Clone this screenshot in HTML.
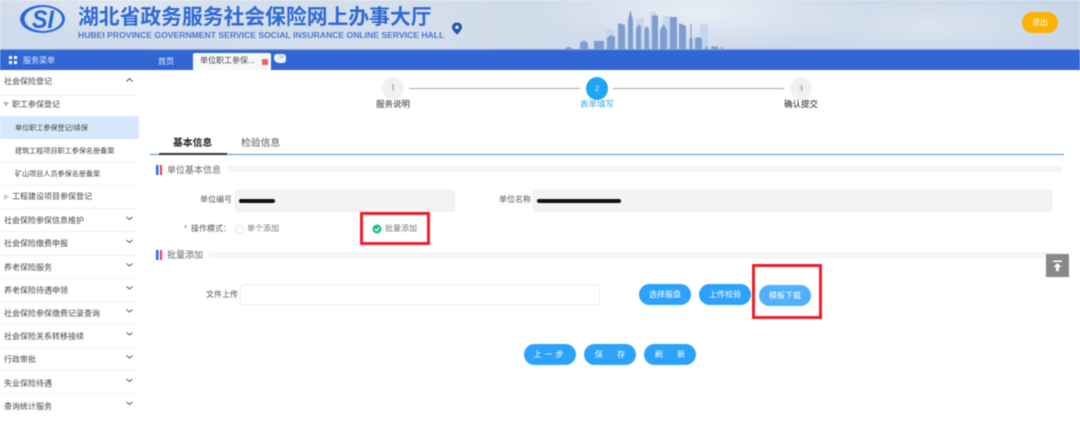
<!DOCTYPE html>
<html lang="zh-CN">
<head>
<meta charset="utf-8">
<title>湖北省政务服务社会保险网上办事大厅</title>
<style>
html,body{margin:0;padding:0;width:1080px;height:433px;overflow:hidden;background:#fff}
#p{position:relative;width:1080px;height:433px;overflow:hidden;background:#fff;font-family:"Liberation Sans","Noto Sans CJK SC",sans-serif;color:#555;filter:blur(.45px)}
#p div,#p span.a{position:absolute;white-space:nowrap}
.hd{left:0;top:0;width:1080px;height:50px;background:
radial-gradient(ellipse 170px 40px at 700px 12px,#e8eef6 0,rgba(232,238,246,0) 100%),
radial-gradient(ellipse 150px 35px at 930px 25px,#dbe4f0 0,rgba(219,228,240,0) 100%),
radial-gradient(ellipse 150px 30px at 120px 5px,#dfe7f2 0,rgba(223,231,242,0) 100%),
linear-gradient(90deg,#cfdbea 0,#d5dfec 35%,#cdd9e9 60%,#c8d6e8 100%)}
.bar{left:0;top:50px;width:1080px;height:20px;background:#3167d5}
.m{left:4px;font-size:8px;line-height:12px;color:#444;font-weight:400}
.sep{left:0;width:139px;height:1px;background:#f0f0f0}
.btn{height:21px;line-height:21px;width:52px;border-radius:11px;background:#2ca2fb;color:#fff;font-size:8px;text-align:center}
.lab{font-size:8px;line-height:12px;color:#555}
.strip{height:6px;background:#f5f5f7}
.sb{width:6px;height:10px;background:linear-gradient(90deg,#1f6ff0 0 45%,#fff 45% 66%,#f0304a 66% 100%)}
.in{box-sizing:border-box;border:1px solid #ececec;border-radius:3px}
.rb{box-sizing:border-box;border:3px solid #e8202c}
.sc{background:#111;height:4px;border-radius:2px}
</style>
</head>
<body>
<div id="p">
<div class="hd"></div>

<svg style="position:absolute;left:0;top:0" width="1080" height="52" viewBox="0 0 1080 52">
<path fill-rule="evenodd" d="M20 19a22.500 14 0 1 0 45 0a22.500 14 0 1 0-45 0zM24.500 19a18.500 11.800 0 1 1 37.500 0a18.500 11.800 0 1 1-37.500 0z" fill="#2568dc"/>
<text x="32" y="28" font-family="Liberation Sans,sans-serif" font-style="italic" font-weight="700" font-size="25" fill="#2568dc" textLength="22" lengthAdjust="spacingAndGlyphs">SI</text>
<path d="M457 22.500c-3.300 0-5 2.400-5 4.700 0 3 5 7.300 5 7.300s5-4.300 5-7.300c0-2.300-1.700-4.700-5-4.700z" fill="#1c56a8"/>
<circle cx="457" cy="27.300" r="1.800" fill="#dfe7f2"/>
<g fill="#bcd3ec" opacity=".7">
<rect x="606" y="30" width="8" height="20"/><rect x="636" y="18" width="8" height="32"/><rect x="650" y="12" width="6" height="38"/><rect x="663" y="16" width="7" height="34"/><rect x="700" y="24" width="8" height="26"/>
</g>
<g fill="#7f9dd0">
<path d="M564 50c1-2 3-3 4.500-3s4 1 4.500 3z"/>
<path d="M580 50v-7l4-2.500 4 2.500v7z"/>
<rect x="594" y="41" width="10" height="9"/>
<path d="M607 50V38l4-3 4 2v13z"/>
<path d="M618 50V23l7 2v25z"/>
<path d="M628 50V20l2.500-10 2.500 10v30z"/>
<path d="M636 50V29l2.500-5 2.500 3v23z"/>
<path d="M644.500 50V29l2-3 2.500 3v21z"/>
<path d="M652 50V16l3-1 3 1v34z"/>
<path d="M660 50V30l3.500-6 3.500 6v20z"/>
<rect x="670" y="17" width="7" height="33"/>
<path d="M679 50V23l7 3v24z"/>
<rect x="689.500" y="38" width="3" height="12"/><rect x="690.500" y="24" width="1" height="16"/>
<path d="M695 50V38l4-1 3 2v11z"/>
<path d="M705 50v-3l2-1 1 4zM711 50v-3l2-1 2 1 1-1 2 1 1 3zM721 50v-4l2 2v2z"/>
</g>
<rect x="0" y="49" width="1080" height="1" fill="#8ba4d0"/>
</svg>

<div style="left:78px;top:6px;font-size:20.800px;line-height:24px;font-weight:700;color:#2f69d6">湖北省政务服务社会保险网上办事大厅</div>
<div style="left:78px;top:30px;font-size:8.600px;line-height:11px;font-weight:700;color:#4677d4">HUBEI PROVINCE GOVERNMENT SERVICE SOCIAL INSURANCE ONLINE SERVICE HALL</div>
<div style="left:1022px;top:12px;width:36px;height:21px;border-radius:11px;background:#fbb203;color:#fff;font-size:8px;line-height:21px;text-align:center">退出</div>

<div class="bar"></div>
<div style="left:9px;top:56px;width:3px;height:3px;background:#fff;box-shadow:5px 0 #fff,0 5px #fff,5px 5px #fff"></div>
<div style="left:23px;top:55px;font-size:8px;line-height:12px;color:#e6eefc">服务菜单</div>
<div style="left:158px;top:56px;font-size:8px;line-height:12px;color:#e6eefc">首页</div>
<div style="left:193px;top:53px;width:78px;height:17px;background:#f7f8fa;border-radius:2px 2px 0 0"></div>
<div style="left:200px;top:55px;font-size:8px;line-height:12px;color:#444">单位职工参保...</div>
<div style="left:262px;top:59px;width:6px;height:6px;background:#f4605c"></div>
<div style="left:274px;top:54px;width:12px;height:9px;background:#eef2fb;border-radius:3px 3px 3px 5px"></div>
<div style="left:278px;top:55px;font-size:6px;line-height:7px;color:#8a9ab8">≫</div>

<!-- Sidebar -->
<div class="m" style="top:76px">社会保险登记</div>
<div class="sep" style="top:95px"></div>
<div style="left:3px;top:102px;width:0;height:0;border-left:3px solid transparent;border-right:3px solid transparent;border-top:5px solid #bbb"></div>
<div class="m" style="left:12px;top:99px">职工参保登记</div>
<div style="left:0;top:116px;width:139px;height:23px;background:#d5e9fd"></div>
<div class="m" style="left:15px;top:122px;font-size:7.100px">单位职工参保登记/续保</div>
<div class="sep" style="top:162px"></div>
<div class="m" style="left:15px;top:145px;font-size:7.100px">建筑工程项目职工参保名册备案</div>
<div class="sep" style="top:185px"></div>
<div class="m" style="left:15px;top:168px;font-size:7.100px">矿山项目人员参保名册备案</div>
<div style="left:4px;top:194px;width:0;height:0;border-top:3px solid transparent;border-bottom:3px solid transparent;border-left:5px solid #ccc"></div>
<div class="m" style="left:12px;top:191px">工程建设项目参保登记</div>
<div class="sep" style="top:208px"></div>
<div class="m" style="top:215px">社会保险参保信息维护</div>
<div class="sep" style="top:231px"></div>
<div class="m" style="top:238px">社会保险缴费申报</div>
<div class="sep" style="top:255px"></div>
<div class="m" style="top:262px">养老保险服务</div>
<div class="sep" style="top:278px"></div>
<div class="m" style="top:285px">养老保险待遇申领</div>
<div class="sep" style="top:301px"></div>
<div class="m" style="top:308px">社会保险参保缴费记录查询</div>
<div class="sep" style="top:324px"></div>
<div class="m" style="top:331px">社会保险关系转移接续</div>
<div class="sep" style="top:347px"></div>
<div class="m" style="top:354px">行政审批</div>
<div class="sep" style="top:370px"></div>
<div class="m" style="top:378px">失业保险待遇</div>
<div class="sep" style="top:393px"></div>
<div class="m" style="top:401px">查询统计服务</div>

<svg style="position:absolute;left:124px;top:70px" width="14" height="345" viewBox="0 0 14 345" fill="none" stroke="#555" stroke-width="1">
<path d="M2.500 11.500l3-3 3 3"/>
<path d="M2.500 147l3 2.500 3-2.500M2.500 170l3 2.500 3-2.500M2.500 193.500l3 2.500 3-2.500M2.500 216.500l3 2.500 3-2.500M2.500 239.500l3 2.500 3-2.500M2.500 262.500l3 2.500 3-2.500M2.500 285.500l3 2.500 3-2.500M2.500 309l3 2.500 3-2.500M2.500 332l3 2.500 3-2.500"/>
</svg>

<!-- Steps -->
<div style="left:382px;top:77px;width:22px;height:22px;border-radius:50%;background:#f1f1f1;color:#777;font:8px/22px 'Liberation Serif',serif;text-align:center">1</div>
<div style="left:409px;top:88px;width:171px;height:1px;background:#a8a8a8"></div>
<div style="left:586px;top:77px;width:22px;height:23px;border-radius:50%;background:#1ea6f2;color:#dff2ff;font:8px/23px 'Liberation Serif',serif;text-align:center">2</div>
<div style="left:613px;top:88px;width:171px;height:1px;background:#a8a8a8"></div>
<div style="left:790px;top:77px;width:22px;height:23px;border-radius:50%;background:#f1f1f1;color:#777;font:8px/23px 'Liberation Serif',serif;text-align:center">3</div>
<div style="left:376px;top:98px;font-size:8.500px;line-height:12px;color:#333">服务说明</div>
<div style="left:580px;top:98px;font-size:8.500px;line-height:12px;color:#38a6f0">表单填写</div>
<div style="left:784px;top:98px;font-size:8.500px;line-height:12px;color:#222">确认提交</div>

<!-- Tabs -->
<div style="left:173px;top:137px;font-size:9.800px;line-height:13px;color:#222;font-weight:700">基本信息</div>
<div style="left:241px;top:137px;font-size:9.800px;line-height:13px;color:#555">检验信息</div>
<div style="left:150px;top:154px;width:914px;height:1px;background:#4a94d8"></div>
<div style="left:159px;top:153px;width:68px;height:1.500px;background:#333"></div>

<!-- Section 1 -->
<div class="sb" style="left:156px;top:165px"></div>
<div style="left:167px;top:164px;font-size:9px;line-height:12px;color:#666">单位基本信息</div>
<div class="strip" style="left:227px;top:166px;width:835px"></div>

<div class="lab" style="left:200px;top:194px">单位编号</div>
<div class="in" style="left:235px;top:190px;width:220px;height:22px;background:#f3f3f3"></div>
<div class="sc" style="left:239px;top:199px;width:36px"></div>
<div class="lab" style="left:499px;top:194px">单位名称</div>
<div class="in" style="left:533px;top:190px;width:519px;height:22px;background:#f3f3f3"></div>
<div class="sc" style="left:537px;top:199px;width:84px"></div>

<div style="left:184px;top:223px;font-size:8px;line-height:12px;color:#e8505a">*</div>
<div class="lab" style="left:191px;top:223px">操作模式：</div>
<div style="left:235px;top:225px;width:9px;height:9px;box-sizing:border-box;border:1px solid #e4e4e4;border-radius:50%"></div>
<div class="lab" style="left:247px;top:223px;color:#777">单个添加</div>
<div class="rb" style="left:360px;top:212px;width:70px;height:33px"></div>
<svg style="position:absolute;left:372px;top:224px" width="10" height="10" viewBox="0 0 10 10"><circle cx="5" cy="5" r="4.500" fill="#1fbf87"/><path d="M2.800 5l1.600 1.700L7.200 3.600" fill="none" stroke="#fff" stroke-width="1.200"/></svg>
<div class="lab" style="left:385px;top:223px;color:#777">批量添加</div>

<!-- Section 2 -->
<div class="sb" style="left:156px;top:250px"></div>
<div style="left:167px;top:249px;font-size:9px;line-height:12px;color:#666">批量添加</div>
<div class="strip" style="left:209px;top:252px;width:853px"></div>

<div class="lab" style="left:206px;top:289px">文件上传</div>
<div class="in" style="left:240px;top:284px;width:360px;height:21px;background:#fff"></div>

<div class="btn" style="left:639px;top:284px">选择服盘</div>
<div class="btn" style="left:699px;top:284px">上传校验</div>
<div class="btn" style="left:759px;top:285px;background:#50b0fd">模板下载</div>
<div class="rb" style="left:752px;top:264px;width:70px;height:55px"></div>

<div style="left:1046px;top:254px;width:23px;height:23px;background:#888"></div>
<svg style="position:absolute;left:1051px;top:259px" width="13" height="13" viewBox="0 0 13 13"><path d="M2 1.500h9v1.500H2zM6.500 4l4 4H8v4H5V8H2.500z" fill="#fff"/></svg>

<div class="btn" style="left:524px;top:344px;letter-spacing:3px">上一步</div>
<div class="btn" style="left:584px;top:344px;word-spacing:12px">保 存</div>
<div class="btn" style="left:644px;top:344px;word-spacing:12px">刷 新</div>
</div>
</body>
</html>
